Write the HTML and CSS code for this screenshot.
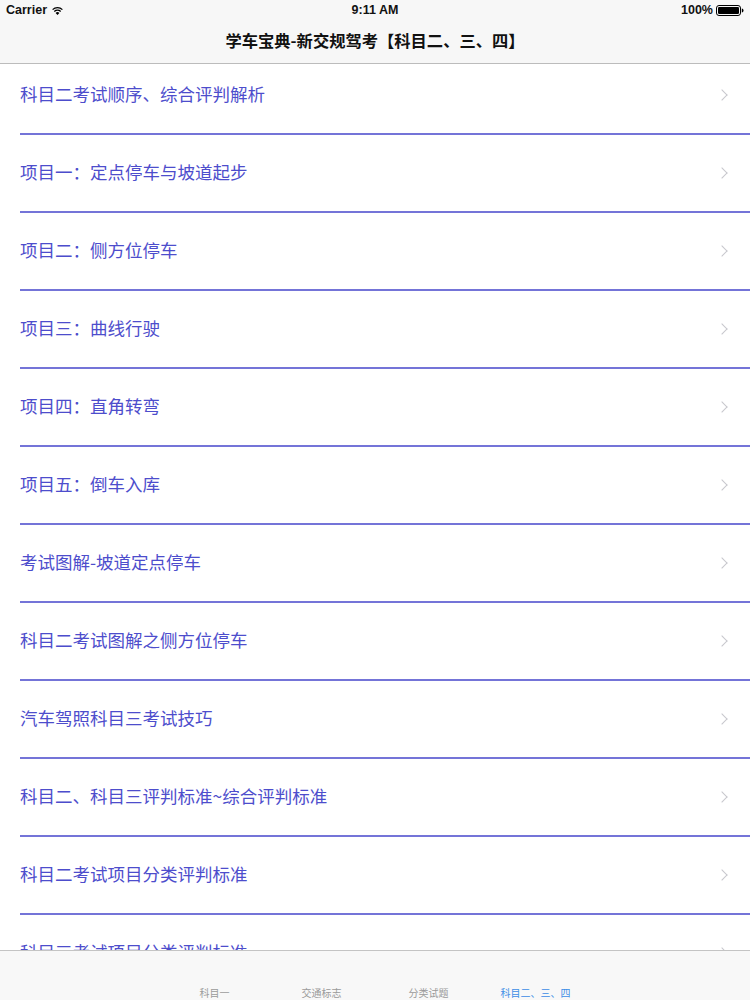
FILE: index.html
```html
<!DOCTYPE html>
<html lang="zh-CN">
<head>
    <meta charset="UTF-8">
    <meta name="viewport" content="width=device-width, initial-scale=1.0">
    <title>学车宝典-新交规驾考</title>
    <link rel="stylesheet" href="styles.css">
</head>
<body>
    <div class="screen">
        <div class="top-bar">
            <div class="status-bar">
                <span class="carrier">Carrier
                    <svg class="wifi" width="11" height="9" viewBox="0 0 11 9">
                        <path d="M5.5 9 L3.6 6.9 A2.8 2.8 0 0 1 7.4 6.9 Z" fill="#000"/>
                        <path d="M2.3 5.5 A4.6 4.6 0 0 1 8.7 5.5" stroke="#000" stroke-width="1.3" fill="none"/>
                        <path d="M0.6 3.6 A7 7 0 0 1 10.4 3.6" stroke="#000" stroke-width="1.3" fill="none"/>
                    </svg>
                </span>
                <span class="clock">9:11 AM</span>
                <span class="battery">100%
                    <svg width="28" height="11" viewBox="0 0 28 11">
                        <rect x="0.5" y="0.5" width="24" height="10" rx="2.5" fill="none" stroke="#000"/>
                        <rect x="2" y="2" width="21" height="7" rx="1.2" fill="#000"/>
                        <path d="M25.8 3.5 Q27.5 3.5 27.5 5.5 Q27.5 7.5 25.8 7.5 Z" fill="#000"/>
                    </svg>
                </span>
            </div>
            <div class="nav-bar">学车宝典-新交规驾考【科目二、三、四】</div>
        </div>

        <div class="content">
            <ul class="list">
                <li><span>科目二考试顺序、综合评判解析</span><i class="chevron"></i></li>
                <li><span>项目一：定点停车与坡道起步</span><i class="chevron"></i></li>
                <li><span>项目二：侧方位停车</span><i class="chevron"></i></li>
                <li><span>项目三：曲线行驶</span><i class="chevron"></i></li>
                <li><span>项目四：直角转弯</span><i class="chevron"></i></li>
                <li><span>项目五：倒车入库</span><i class="chevron"></i></li>
                <li><span>考试图解-坡道定点停车</span><i class="chevron"></i></li>
                <li><span>科目二考试图解之侧方位停车</span><i class="chevron"></i></li>
                <li><span>汽车驾照科目三考试技巧</span><i class="chevron"></i></li>
                <li><span>科目二、科目三评判标准~综合评判标准</span><i class="chevron"></i></li>
                <li><span>科目二考试项目分类评判标准</span><i class="chevron"></i></li>
                <li><span>科目三考试项目分类评判标准</span><i class="chevron"></i></li>
            </ul>
        </div>

        <div class="tab-bar">
            <div class="tab">科目一</div>
            <div class="tab">交通标志</div>
            <div class="tab">分类试题</div>
            <div class="tab active">科目二、三、四</div>
        </div>
    </div>
</body>
</html>
```

FILE: styles.css
```css
body {
    margin: 0;
    padding: 0;
    font-family: "Noto Sans CJK SC", "Liberation Sans", sans-serif;
    background-color: #fff;
}
.screen {
    width: 750px;
    height: 1000px;
    display: flex;
    flex-direction: column;
    overflow: hidden;
}
.top-bar {
    background-color: #f7f7f7;
    border-bottom: 1px solid #bcbcbc;
    position: relative;
    z-index: 2;
}
.status-bar {
    height: 20px;
    display: flex;
    align-items: center;
    justify-content: space-between;
    padding: 0 6px;
    font-family: "Liberation Sans", sans-serif;
    font-size: 12.5px;
    font-weight: bold;
    color: #111;
}
.carrier, .battery {
    display: flex;
    align-items: center;
    gap: 5px;
    width: 120px;
}
.battery {
    justify-content: flex-end;
    gap: 3px;
}
.nav-bar {
    height: 43px;
    display: flex;
    align-items: center;
    justify-content: center;
    font-size: 16.3px;
    font-weight: bold;
    color: #111;
    padding-bottom: 1px;
    box-sizing: border-box;
    padding-bottom: 4px;
}
.content {
    flex: 1;
    overflow: hidden;
}
.list {
    list-style: none;
    margin: -7px 0 0 0;
    padding: 0;
}
.list li {
    height: 76px;
    box-sizing: border-box;
    margin-left: 20px;
    padding-right: 20px;
    padding-bottom: 3px;
    border-bottom: 2px solid #7474d8;
    display: flex;
    align-items: center;
    justify-content: space-between;
    font-size: 17.5px;
    color: #4d4dcc;
    height: 78px;
}
.chevron {
    width: 7px;
    height: 7px;
    border-top: 1.6px solid #c7c7cc;
    border-right: 1.6px solid #c7c7cc;
    transform: rotate(45deg);
    margin-right: 4px;
    margin-top: 3px;
}
.tab-bar {
    height: 49px;
    background-color: #f8f8f8;
    border-top: 1px solid #c4c4c4;
    display: flex;
    justify-content: center;
    position: relative;
    z-index: 2;
}
.tab {
    width: 107px;
    text-align: center;
    font-size: 10px;
    color: #9a9a9a;
    padding-top: 34px;
}
.tab.active {
    color: #3d8de6;
}
```
